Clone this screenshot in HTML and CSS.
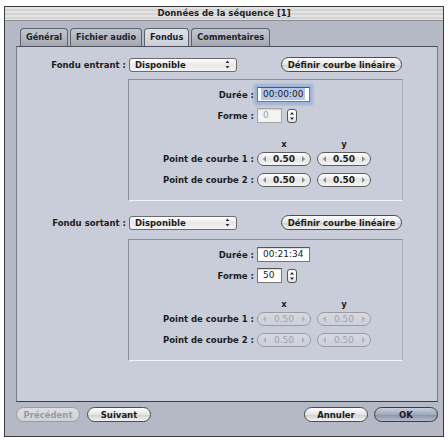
FILE: index.html
```html
<!DOCTYPE html>
<html lang="fr">
<head>
    <meta charset="UTF-8">
    <title>Données de la séquence [1]</title>
    <link rel="stylesheet" href="styles.css">
</head>
<body>
<div class="window">
    <div class="titlebar">Données de la séquence [1]</div>
    <div class="content">
        <div class="tabs">
            <div class="tab">Général</div>
            <div class="tab">Fichier audio</div>
            <div class="tab active">Fondus</div>
            <div class="tab">Commentaires</div>
        </div>
        <div class="panel">
            <!-- fondu entrant -->
            <div class="fade-row">
                <span class="fade-label">Fondu entrant :</span>
                <div class="popup">
                    <span>Disponible</span>
                    <svg width="5" height="9" viewBox="0 0 5 9"><path d="M2.5 0.5 L4.5 3 L0.5 3 Z M2.5 8.5 L4.5 6 L0.5 6 Z" fill="#333"/></svg>
                </div>
                <button class="btn define">Définir courbe linéaire</button>
            </div>
            <div class="group">
                <div class="row">
                    <span class="lbl">Durée :</span>
                    <span class="field time focus"><span class="sel">00:00:00</span></span>
                </div>
                <div class="row">
                    <span class="lbl">Forme :</span>
                    <span class="field short disabled">0</span>
                    <span class="spin"><svg width="8" height="12" viewBox="0 0 8 12"><path d="M4 2 L6 4.5 L2 4.5 Z M4 10 L6 7.5 L2 7.5 Z" fill="#333"/></svg></span>
                </div>
                <div class="axes"><span>x</span><span>y</span></div>
                <div class="row point">
                    <span class="lbl">Point de courbe 1 :</span>
                    <span class="stepper"><i class="arr left"></i><span>0.50</span><i class="arr right"></i></span>
                    <span class="stepper"><i class="arr left"></i><span>0.50</span><i class="arr right"></i></span>
                </div>
                <div class="row point">
                    <span class="lbl">Point de courbe 2 :</span>
                    <span class="stepper"><i class="arr left"></i><span>0.50</span><i class="arr right"></i></span>
                    <span class="stepper"><i class="arr left"></i><span>0.50</span><i class="arr right"></i></span>
                </div>
            </div>

            <!-- fondu sortant -->
            <div class="fade-row second">
                <span class="fade-label">Fondu sortant :</span>
                <div class="popup">
                    <span>Disponible</span>
                    <svg width="5" height="9" viewBox="0 0 5 9"><path d="M2.5 0.5 L4.5 3 L0.5 3 Z M2.5 8.5 L4.5 6 L0.5 6 Z" fill="#333"/></svg>
                </div>
                <button class="btn define">Définir courbe linéaire</button>
            </div>
            <div class="group">
                <div class="row">
                    <span class="lbl">Durée :</span>
                    <span class="field time">00:21:34</span>
                </div>
                <div class="row">
                    <span class="lbl">Forme :</span>
                    <span class="field short">50</span>
                    <span class="spin"><svg width="8" height="12" viewBox="0 0 8 12"><path d="M4 2 L6 4.5 L2 4.5 Z M4 10 L6 7.5 L2 7.5 Z" fill="#333"/></svg></span>
                </div>
                <div class="axes"><span>x</span><span>y</span></div>
                <div class="row point">
                    <span class="lbl">Point de courbe 1 :</span>
                    <span class="stepper off"><i class="arr left"></i><span>0.50</span><i class="arr right"></i></span>
                    <span class="stepper off"><i class="arr left"></i><span>0.50</span><i class="arr right"></i></span>
                </div>
                <div class="row point">
                    <span class="lbl">Point de courbe 2 :</span>
                    <span class="stepper off"><i class="arr left"></i><span>0.50</span><i class="arr right"></i></span>
                    <span class="stepper off"><i class="arr left"></i><span>0.50</span><i class="arr right"></i></span>
                </div>
            </div>
        </div>
        <div class="footer">
            <button class="btn nav disabled">Précédent</button>
            <button class="btn nav">Suivant</button>
            <span class="spacer"></span>
            <button class="btn nav">Annuler</button>
            <button class="btn nav default">OK</button>
        </div>
    </div>
</div>
</body>
</html>
```

FILE: styles.css
```css
body{
    margin: 0;
    background: #fff;
    font-family: "DejaVu Sans", sans-serif;
    font-size: 8.5px;
    color: #1c1c1c;
}
.window{
    margin: 6px 0 0 4px;
    width: 440px;
    height: 431px;
    box-sizing: border-box;
    border: 1px solid #3a3a3a;
    background: #b5b9c5;
    display: flex;
    flex-direction: column;
}
.titlebar{
    height: 13px;
    line-height: 13px;
    text-align: center;
    font-weight: bold;
    color: #222;
    background: repeating-linear-gradient(to bottom, #e3e3e3 0, #e3e3e3 2px, #d3d3d3 2px, #d3d3d3 4px);
    border-bottom: 1px solid #8c8c8c;
}
.content{
    flex: 1;
    padding: 7px 5px 0 11px;
    display: flex;
    flex-direction: column;
}

/* onglets */
.tabs{
    display: flex;
    gap: 2px;
    margin-left: 4px;
    height: 18px;
}
.tab{
    padding: 0 5px;
    border: 1px solid #5d616b;
    border-bottom: none;
    border-radius: 4px 4px 0 0;
    background: linear-gradient(#c3c7d1, #a3a7b1);
    line-height: 17px;
    font-weight: bold;
    font-size: 8.2px;
    color: #232323;
}
.tab.active{
    background: linear-gradient(#dfe2ea, #c9cdd9);
}

.panel{
    height: 356px;
    box-sizing: border-box;
    border: 1px solid #7a7e88;
    border-top-color: #4a4e58;
    border-bottom-color: #3a3d44;
    background: #c9cdd9;
    padding-top: 10px;
}
.fade-row{
    display: flex;
    align-items: center;
    height: 15px;
}
.fade-row.second{
    margin-top: 14px;
}
.fade-label{
    width: 109px;
    text-align: right;
    font-weight: bold;
    margin-right: 3px;
}
.popup{
    width: 108px;
    height: 14px;
    box-sizing: border-box;
    border: 1px solid #6a6a6a;
    border-radius: 3px;
    background: linear-gradient(#ffffff, #e8e8e8 50%, #f4f4f4);
    display: flex;
    align-items: center;
    justify-content: space-between;
    padding: 0 6px 0 5px;
    font-weight: bold;
}

.btn{
    font-family: inherit;
    font-size: 8.5px;
    font-weight: bold;
    color: #1c1c1c;
    height: 15px;
    padding: 0;
    box-sizing: border-box;
    border: 1px solid #4c4c4c;
    border-radius: 8px;
    background: linear-gradient(#ffffff, #e4e4e4 50%, #d2d2d2 55%, #f2f2f2);
}
.define{
    margin-left: 44px;
    width: 121px;
}

/* cadres */
.group{
    margin: 7px 0 0 111px;
    width: 275px;
    height: 122px;
    box-sizing: border-box;
    border: 1px solid #8b8f99;
    border-right-color: #a9adb7;
    border-bottom-color: #f2f3f6;
    padding-top: 7px;
}
.fade-row.second + .group{
    margin-top: 9px;
}
.row{
    display: flex;
    align-items: center;
    height: 15px;
    margin-bottom: 6px;
}
.lbl{
    width: 125px;
    margin-right: 3px;
    text-align: right;
    font-weight: bold;
}
.field{
    height: 15px;
    box-sizing: border-box;
    border: 1px solid #777;
    border-top-color: #555;
    background: #fff;
    box-shadow: inset 0 1px 1px rgba(0,0,0,.15);
    padding-left: 5px;
    line-height: 13px;
    font-size: 9px;
}
.time{
    width: 53px;
}
.short{
    width: 25px;
}
.field.disabled{
    color: #a0a0a0;
    border-color: #a6a6a6;
    background: #f3f3f3;
}
.focus{
    box-shadow: 0 0 0 2px #9fb6e0, 0 0 2px 3px rgba(110,145,210,.45);
    padding-left: 3px;
}
.sel{
    background: #b4c7ea;
    padding: 1px 2px;
}
.spin{
    margin-left: 5px;
    width: 10px;
    height: 14px;
    box-sizing: border-box;
    border: 1px solid #555;
    border-radius: 3px;
    background: linear-gradient(#ffffff, #e2e2e2);
    display: flex;
    align-items: center;
    justify-content: center;
}

.axes{
    display: flex;
    gap: 6px;
    margin: 16px 0 0 128px;
    height: 10px;
    line-height: 10px;
    font-weight: bold;
}
.axes span{
    width: 54px;
    text-align: center;
}
.row.point{
    height: 14px;
    margin: 3px 0 7px 0;
}
.row.point + .row.point{
    margin-top: 0;
}
.stepper{
    width: 54px;
    height: 14px;
    box-sizing: border-box;
    border: 1px solid #5e5e5e;
    border-radius: 7px;
    background: linear-gradient(#ffffff, #e6e6e6 50%, #f5f5f5);
    margin-right: 6px;
    display: flex;
    align-items: center;
    justify-content: space-between;
    padding: 0 5px;
    font-weight: bold;
    font-size: 9px;
}
.arr{
    width: 0;
    height: 0;
    border-top: 3px solid transparent;
    border-bottom: 3px solid transparent;
}
.arr.left{
    border-right: 3px solid #8a8a8a;
}
.arr.right{
    border-left: 3px solid #8a8a8a;
}
.stepper.off{
    border-color: #9c9c9c;
    color: #a2a2a2;
    font-weight: normal;
    background: linear-gradient(#d6d9e2, #cdd0da);
}
.stepper.off .arr.left{
    border-right-color: #b0b0b0;
}
.stepper.off .arr.right{
    border-left-color: #b0b0b0;
}

.footer{
    display: flex;
    margin-top: 5px;
}
.nav{
    width: 64px;
    margin-right: 7px;
}
.nav.disabled{
    color: #9a9a9a;
    border-color: #9a9a9a;
    background: linear-gradient(#dcdee4, #cfd2da);
}
.spacer{
    flex: 1;
}
.nav.default{
    margin-right: 0;
    margin-left: -1px;
    background: linear-gradient(#c9cfdc, #a0a8bc 50%, #8c95ab 55%, #b4bccc);
    border-color: #3c3c3c;
}
```
